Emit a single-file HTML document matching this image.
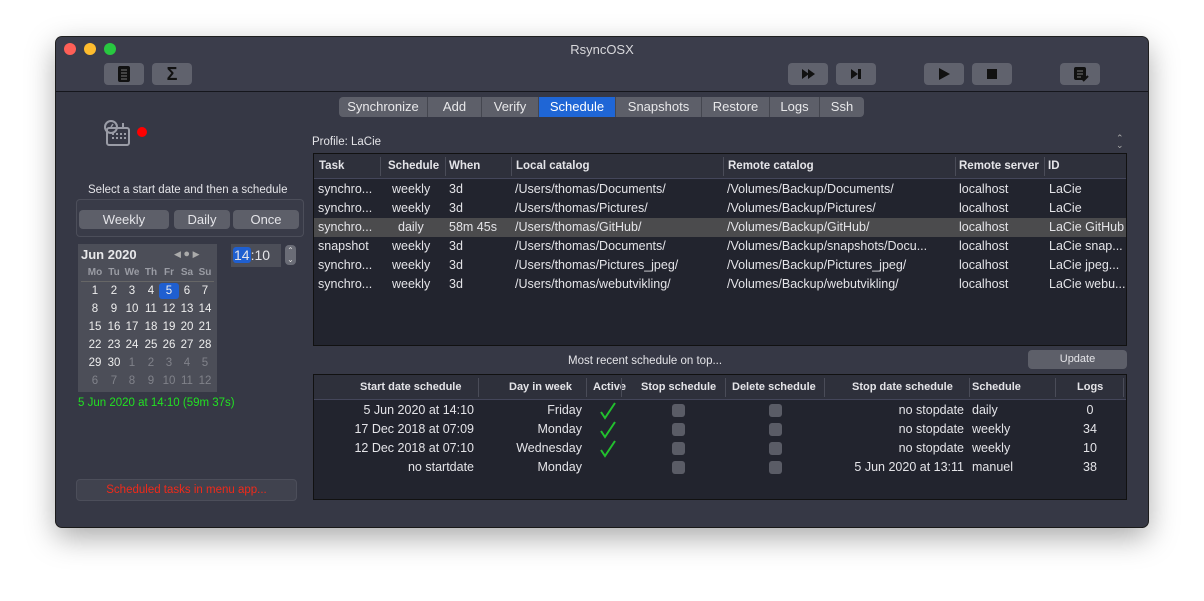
<!DOCTYPE html>
<html><head><meta charset="utf-8"><style>
*{margin:0;padding:0;box-sizing:border-box}
body{width:1204px;height:601px;background:#fff;position:relative;overflow:hidden;font-family:"Liberation Sans",sans-serif;color:#e4e4e8}
.a{position:absolute;white-space:nowrap}
#win{position:absolute;left:56px;top:37px;width:1092px;height:490px;background:#363845;border-radius:6px;box-shadow:0 10px 30px rgba(0,0,0,.35),0 0 0 1px #222;overflow:hidden}
#tb{position:absolute;left:0;top:0;width:1092px;height:55px;background:#3b3d4b;border-bottom:1px solid #15161c}
.tbtn{position:absolute;top:26px;width:40px;height:22px;background:#60626d;border-radius:4px}
.tab{position:absolute;top:60px;height:20px;background:#5d5f69;font-size:13px;line-height:20px;text-align:center;border-right:1px solid #44464f;color:#e8e8ea}
.tbl{position:absolute;background:#22242e;border:1px solid #111}
.hd{position:absolute;left:0;right:0;top:0;height:25px;background:#2e303b;border-bottom:1px solid #44465a;font-size:11.5px;font-weight:bold;line-height:25px}
.r{font-size:12.5px;line-height:19px}
.btn{position:absolute;height:19px;background:#5d5f69;border-radius:4px;font-size:13px;line-height:19px;text-align:center}
.cb{position:absolute;width:13px;height:13px;background:#5a5c66;border-radius:3px}
.sep{position:absolute;top:3px;width:1px;height:19px;background:#4a4c58}
</style></head><body>
<div id="win">
<div id="tb">
 <div class="a" style="left:8px;top:6px;width:12px;height:12px;border-radius:6px;background:#fe5f57"></div>
 <div class="a" style="left:28px;top:6px;width:12px;height:12px;border-radius:6px;background:#febc2e"></div>
 <div class="a" style="left:48px;top:6px;width:12px;height:12px;border-radius:6px;background:#28c840"></div>
 <div class="a" style="left:0;width:1092px;top:5px;text-align:center;font-size:13px;color:#d8d8dc">RsyncOSX</div>
 <div class="tbtn" style="left:48px"><svg width="40" height="22"><rect x="14" y="3" width="12" height="16" rx="2" fill="#111"/><path d="M17 7h6M17 10h6M17 13h6M17 16h6" stroke="#777" stroke-width="1"/></svg></div>
 <div class="tbtn" style="left:96px;font-size:18px;font-weight:bold;color:#111;text-align:center;line-height:22px">Σ</div>
 <div class="tbtn" style="left:732px"><svg width="40" height="22"><path d="M14 6l7 5-7 5zM20 6l7 5-7 5z" fill="#111"/></svg></div>
 <div class="tbtn" style="left:780px"><svg width="40" height="22"><path d="M15 6l7 5-7 5z" fill="#111"/><rect x="22" y="6" width="3" height="10" fill="#111"/></svg></div>
 <div class="tbtn" style="left:868px"><svg width="40" height="22"><path d="M15 5l11 6-11 6z" fill="#111"/></svg></div>
 <div class="tbtn" style="left:916px"><svg width="40" height="22"><rect x="15" y="6" width="10" height="10" fill="#111"/></svg></div>
 <div class="tbtn" style="left:1004px"><svg width="40" height="22"><rect x="14" y="4" width="12" height="13" rx="2" fill="#111"/><path d="M17 8h6M17 11h6M17 14h4" stroke="#777"/><path d="M23 18l5-5" stroke="#111" stroke-width="2"/></svg></div>
</div>
<div class="tab" style="left:283px;width:89px;border-radius:4px 0 0 4px">Synchronize</div>
<div class="tab" style="left:372px;width:54px">Add</div>
<div class="tab" style="left:426px;width:57px">Verify</div>
<div class="tab" style="left:483px;width:77px;background:#1f66d6;color:#fff">Schedule</div>
<div class="tab" style="left:560px;width:86px">Snapshots</div>
<div class="tab" style="left:646px;width:68px">Restore</div>
<div class="tab" style="left:714px;width:50px">Logs</div>
<div class="tab" style="left:764px;width:44px;border-radius:0 4px 4px 0;border-right:0">Ssh</div>
<svg class="a" style="left:47px;top:82px" width="30" height="28"><circle cx="8" cy="8" r="6" fill="none" stroke="#9a9ca6" stroke-width="2"/><path d="M8 8l2-3" stroke="#9a9ca6" stroke-width="1.5"/><rect x="4" y="9" width="22" height="17" rx="2" fill="none" stroke="#9a9ca6" stroke-width="2"/><rect x="19" y="4" width="2" height="5" fill="#9a9ca6"/><path d="M9 15h2M13 15h2M17 15h2M21 15h2M9 19h2M13 19h2M17 19h2M21 19h2" stroke="#9a9ca6" stroke-width="2"/></svg>
<div class="a" style="left:81px;top:90px;width:10px;height:10px;border-radius:5px;background:#f00"></div>
<div class="a" style="left:32px;top:147px;font-size:11.5px">Select a start date and then a schedule</div>
<div class="a" style="left:20px;top:162px;width:228px;height:38px;border:1px solid #4c4e5a;border-radius:4px;background:#393b48"></div>
<div class="btn" style="left:23px;top:173px;width:90px">Weekly</div>
<div class="btn" style="left:118px;top:173px;width:56px">Daily</div>
<div class="btn" style="left:177px;top:173px;width:66px">Once</div>
<div class="a" style="left:22px;top:207px;width:139px;height:148px;background:#4c4e58"></div>
<div class="a" style="left:25px;top:210px;font-size:13px;font-weight:bold;color:#e8e8ea">Jun 2020</div>
<div class="a" style="left:118px;top:211px;font-size:9px;color:#aaa">◀ <span style="font-size:11px">●</span> ▶</div>
<div class="a" style="left:25px;top:244px;width:133px;border-top:1px solid #666"></div>
<div id="cal"></div>
<div class="a" style="left:175px;top:207px;width:50px;height:23px;background:#4c4e58;font-size:14px;line-height:23px;padding-left:2px"><span style="background:#1f5fd0;border-radius:3px;padding:0 1px">14</span>:10</div>
<div class="a" style="left:229px;top:208px;width:11px;height:20px;background:#6a6c76;border-radius:4px;font-size:8px;line-height:9px;text-align:center;color:#ddd;padding-top:1px">⌃<br>⌄</div>
<div class="a" style="left:22px;top:360px;font-size:11.5px;color:#22e022">5 Jun 2020 at 14:10 (59m 37s)</div>
<div class="a" style="left:20px;top:442px;width:221px;height:22px;background:#40424e;border:1px solid #4c4e5a;border-radius:4px;font-size:11.5px;color:#f02a1a;text-align:center;line-height:20px">Scheduled tasks in menu app...</div>
<div class="a" style="left:256px;top:99px;font-size:11.5px">Profile: LaCie</div>
<div class="a" style="left:1060px;top:98px;font-size:9px;color:#aaa;line-height:7px">⌃<br>⌄</div>
<div class="tbl" style="left:257px;top:116px;width:814px;height:193px">
 <div class="hd">
  <span class="a" style="left:5px">Task</span><div class="sep" style="left:66px"></div>
  <span class="a" style="left:74px">Schedule</span><div class="sep" style="left:131px"></div>
  <span class="a" style="left:135px">When</span><div class="sep" style="left:197px"></div>
  <span class="a" style="left:202px">Local catalog</span><div class="sep" style="left:409px"></div>
  <span class="a" style="left:414px">Remote catalog</span><div class="sep" style="left:641px"></div>
  <span class="a" style="left:645px">Remote server</span><div class="sep" style="left:730px"></div>
  <span class="a" style="left:734px">ID</span>
 </div>
 <div class="a" style="left:0;top:64px;width:812px;height:19px;background:#4b4b4d"></div>
 <div id="rows"></div>
</div>
<div class="a" style="left:512px;top:318px;font-size:11.5px">Most recent schedule on top...</div>
<div class="btn" style="left:972px;top:313px;width:99px;font-size:11px;background:#5d5f69">Update</div>
<div class="tbl" style="left:257px;top:337px;width:814px;height:126px">
 <div class="hd" style="font-size:11px">
  <span class="a" style="left:46px">Start date schedule</span><div class="sep" style="left:164px"></div>
  <span class="a" style="left:195px">Day in week</span><div class="sep" style="left:272px"></div>
  <span class="a" style="left:279px">Active</span><div class="sep" style="left:307px"></div>
  <span class="a" style="left:327px">Stop schedule</span><div class="sep" style="left:411px"></div>
  <span class="a" style="left:418px">Delete schedule</span><div class="sep" style="left:510px"></div>
  <span class="a" style="left:538px">Stop date schedule</span><div class="sep" style="left:655px"></div>
  <span class="a" style="left:658px">Schedule</span><div class="sep" style="left:741px"></div>
  <span class="a" style="left:763px">Logs</span><div class="sep" style="left:809px"></div>
 </div>
 <div id="rows2"></div>
</div>
</div>
<script>
var c='',cx=[39,58,76,95,113,131,149],hx=['Mo','Tu','We','Th','Fr','Sa','Su'];
for(var i=0;i<7;i++)c+='<div class="a" style="left:'+(cx[i]-12)+'px;top:230px;width:24px;text-align:center;font-size:10px;font-weight:bold;color:#9a9ca4">'+hx[i]+'</div>';
var d=[1,2,3,4,5,6,7,8,9,10,11,12,13,14,15,16,17,18,19,20,21,22,23,24,25,26,27,28,29,30,1,2,3,4,5,6,7,8,9,10,11,12];
for(var k=0;k<42;k++){var r=Math.floor(k/7),q=k%7,grey=k>=30,sel=k==4;
c+='<div class="a" style="left:'+(cx[q]-10)+'px;top:'+(246+r*18)+'px;width:20px;height:16px;line-height:16px;text-align:center;font-size:11.5px;'+(sel?'background:#1f5fd0;border-radius:3px;':'')+'color:'+(grey?'#80828a':'#eee')+'">'+d[k]+'</div>';}
document.getElementById('cal').outerHTML=c;
var R=[['synchro...','weekly','3d','/Users/thomas/Documents/','/Volumes/Backup/Documents/','localhost','LaCie'],
['synchro...','weekly','3d','/Users/thomas/Pictures/','/Volumes/Backup/Pictures/','localhost','LaCie'],
['synchro...','daily','58m 45s','/Users/thomas/GitHub/','/Volumes/Backup/GitHub/','localhost','LaCie GitHub'],
['snapshot','weekly','3d','/Users/thomas/Documents/','/Volumes/Backup/snapshots/Docu...','localhost','LaCie snap...'],
['synchro...','weekly','3d','/Users/thomas/Pictures_jpeg/','/Volumes/Backup/Pictures_jpeg/','localhost','LaCie jpeg...'],
['synchro...','weekly','3d','/Users/thomas/webutvikling/','/Volumes/Backup/webutvikling/','localhost','LaCie webu...']];
var X=[4,76,135,201,413,645,735],s='';
R.forEach(function(r,i){r.forEach(function(t,j){var l=X[j];if(j==1)l=(t=='daily'?84:78);s+='<span class="a r" style="left:'+l+'px;top:'+(26+i*19)+'px">'+t+'</span>';});});
document.getElementById('rows').outerHTML=s;
var B=[['5 Jun 2020 at 14:10','Friday',1,'no stopdate','daily','0'],['17 Dec 2018 at 07:09','Monday',1,'no stopdate','weekly','34'],['12 Dec 2018 at 07:10','Wednesday',1,'no stopdate','weekly','10'],['no startdate','Monday',0,'5 Jun 2020 at 13:11','manuel','38']];
s='';B.forEach(function(b,i){var y=26+i*19;
s+='<span class="a r" style="right:652px;top:'+y+'px">'+b[0]+'</span>';
s+='<span class="a r" style="right:544px;top:'+y+'px">'+b[1]+'</span>';
if(b[2])s+='<svg class="a" style="left:285px;top:'+(y+1)+'px" width="18" height="18"><path d="M2 10l4 6L16 1" fill="none" stroke="#22c02e" stroke-width="2"/></svg>';
s+='<div class="cb" style="left:358px;top:'+(y+3)+'px"></div><div class="cb" style="left:455px;top:'+(y+3)+'px"></div>';
s+='<span class="a r" style="right:162px;top:'+y+'px">'+b[3]+'</span>';
s+='<span class="a r" style="left:658px;top:'+y+'px">'+b[4]+'</span>';
s+='<span class="a r" style="left:'+(776-b[5].length*3.5)+'px;top:'+y+'px">'+b[5]+'</span>';});
document.getElementById('rows2').outerHTML=s;
</script>
</body></html>
